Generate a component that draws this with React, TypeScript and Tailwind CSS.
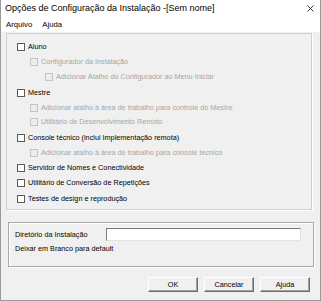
import React from "react";

type Item = { label: string; level: number; enabled: boolean; h: string };

const items: Item[] = [
  { label: "Aluno", level: 0, enabled: true, h: "h-[15px]" },
  { label: "Configurador da Instalação", level: 1, enabled: false, h: "h-[15px]" },
  { label: "Adicionar Atalho do Configurador ao Menu Iniciar", level: 2, enabled: false, h: "h-[16px]" },
  { label: "Mestre", level: 0, enabled: true, h: "h-[15px]" },
  { label: "Adicionar atalho à área de trabalho para controle do Mestre", level: 1, enabled: false, h: "h-[14px]" },
  { label: "Utilitário de Desenvolvimento Remoto", level: 1, enabled: false, h: "h-[16px]" },
  { label: "Console técnico (inclui Implementação remota)", level: 0, enabled: true, h: "h-[15px]" },
  { label: "Adicionar atalho à área de trabalho para console técnico", level: 1, enabled: false, h: "h-[15px]" },
  { label: "Servidor de Nomes e Conectividade", level: 0, enabled: true, h: "h-[15px]" },
  { label: "Utilitário de Conversão de Repetições", level: 0, enabled: true, h: "h-[16px]" },
  { label: "Testes de design e reprodução", level: 0, enabled: true, h: "h-[15px]" },
];

const indent = ["pl-0", "pl-[13px]", "pl-[28px]"];

function CheckRow({ item }: { item: Item }) {
  return (
    <div className={`flex items-start pt-[4px] ${item.h} ${indent[item.level]}`}>
      <span
        className={
          item.enabled
            ? "w-[8px] h-[8px] border border-[#5a5a5a] bg-white shrink-0"
            : "w-[8px] h-[8px] border border-[#c4c4c4] bg-[#ededed] shrink-0"
        }
      />
      <span
        className={`ml-[3px] h-[8px] leading-[8px] whitespace-nowrap ${item.enabled ? "text-black" : "text-[#a6a6a6]"}`}
      >
        {item.label}
      </span>
    </div>
  );
}

function Button({ label }: { label: string }) {
  return (
    <button className="w-[50px] h-[15px] bg-[#f0f0f0] border border-t-white border-l-white border-r-[#6d6d6d] border-b-[#6d6d6d] shadow-[inset_-1px_-1px_0_#a0a0a0] text-[7.25px] text-black leading-none">
      {label}
    </button>
  );
}

export default function App() {
  return (
    <div
      className="w-[321px] h-[301px] bg-[#f0f0f0] border-x border-b border-[#9a9a9a] flex flex-col text-[7.25px] leading-none"
      style={{ fontFamily: '"Liberation Sans", Arial, sans-serif' }}
    >
      {/* title bar */}
      <div className="h-[18px] bg-white flex items-center pl-[4px] pr-[6px] pb-[1px] shrink-0">
        <span className="text-[9px] text-black whitespace-nowrap">Opções de Configuração da Instalação -[Sem nome]</span>
        <svg className="ml-auto" width="7" height="7" viewBox="0 0 7 7">
          <path d="M0.5 0.5 L6.5 6.5 M6.5 0.5 L0.5 6.5" stroke="#222" strokeWidth="0.9" fill="none" />
        </svg>
      </div>

      {/* menu bar */}
      <div className="h-[14px] bg-white flex items-center gap-[10px] pl-[5px] text-[7.75px] text-black shrink-0">
        <span>Arquivo</span>
        <span>Ajuda</span>
      </div>

      {/* options group */}
      <div className="mt-[1px] ml-[5px] w-[306px] h-[177px] border border-[#cfcfcf] shadow-[1px_1px_0_#ffffff] pt-[5px] pl-[10px]">
        {items.map((it) => (
          <CheckRow key={it.label} item={it} />
        ))}
      </div>

      {/* install dir group */}
      <div className="mt-[12px] ml-[7px] w-[306px] h-[45px] border border-[#a8a8a8] shadow-[inset_1px_1px_0_#ffffff,1px_1px_0_#ffffff] pl-[6px] pt-[5px] text-black">
        <div className="flex items-center h-[13px]">
          <span className="w-[91px] whitespace-nowrap">Diretório da Instalação</span>
          <div className="w-[195px] h-[13px] bg-white border border-t-[#7a7a7a] border-l-[#7a7a7a] border-r-[#e3e3e3] border-b-[#e3e3e3]" />
        </div>
        <div className="mt-[4px] whitespace-nowrap">Deixar em Branco para default</div>
      </div>

      {/* buttons */}
      <div className="mt-[10px] flex justify-end gap-[6px] pr-[10px]">
        <Button label="OK" />
        <Button label="Cancelar" />
        <Button label="Ajuda" />
      </div>
    </div>
  );
}
